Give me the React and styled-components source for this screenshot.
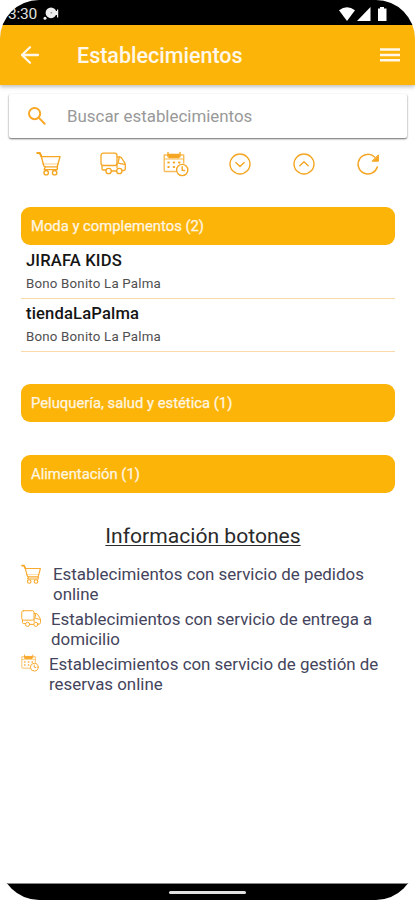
import React from "react";
import styled, { createGlobalStyle } from "styled-components";

const GlobalStyle = createGlobalStyle`
  * { box-sizing: border-box; }
  body { margin: 0; background: #fff; font-family: Roboto, "Liberation Sans", sans-serif; }
  button { border: 0; padding: 0; background: none; font: inherit; color: inherit; }
`;

const Screen = styled.div`
  width: 415px;
  height: 900px;
  display: flex;
  flex-direction: column;
  overflow: hidden;
  border-radius: 39px;
  background: #fff;
`;

const StatusBar = styled.div`
  height: 25px;
  flex: none;
  display: flex;
  align-items: center;
  justify-content: space-between;
  padding: 2px 27px 0 8px;
  background: #000;
  color: #fff;
`;

const StatusGroup = styled.div`
  display: flex;
  align-items: center;
  gap: ${(p) => p.$gap}px;
`;

const Clock = styled.span`
  font-size: 15.5px;
  line-height: 18px;
  color: #e0e0e0;
  letter-spacing: -0.2px;
`;

const AppBar = styled.header`
  height: 60px;
  flex: none;
  display: flex;
  align-items: center;
  padding: 0 14px 0 18px;
  background: #fdb409;
  color: #fff8ea;
  box-shadow: 0 2px 4px rgba(0, 0, 0, 0.25);
`;

const IconButton = styled.button`
  display: flex;
`;

const Title = styled.h1`
  flex: 1;
  margin: 2px 0 0 35px;
  font-size: 21.5px;
  line-height: 28px;
  font-weight: 500;
`;

const SearchBox = styled.label`
  height: 44px;
  flex: none;
  display: flex;
  align-items: center;
  gap: 20px;
  margin: 9px 8px 0 9px;
  padding-left: 18px;
  border-radius: 2px;
  background: #fff;
  box-shadow: 0 1px 2px rgba(0, 0, 0, 0.6);
  color: #f9a825;
`;

const SearchInput = styled.input`
  flex: 1;
  border: 0;
  outline: 0;
  padding: 0;
  background: none;
  font: 400 16.9px/22px Roboto, "Liberation Sans", sans-serif;
  color: #333;
  &::placeholder { color: #999; opacity: 1; }
`;

const Toolbar = styled.nav`
  height: 28px;
  flex: none;
  display: grid;
  grid-template-columns: repeat(6, 63.8px);
  place-items: center;
  margin: 12px 0 0 17px;
  color: #f5a623;
`;

const Section = styled.section`
  margin: ${(p) => p.$top}px 20px 0 21px;
`;

const SectionHeader = styled.h2`
  height: 38px;
  margin: 0;
  padding-left: 10px;
  border-radius: 9px;
  background: #fdb409;
  color: #fff6e2;
  font-size: 14.8px;
  font-weight: 400;
  line-height: 38px;
  -webkit-text-stroke: 0.25px #fff6e2;
`;

const Shop = styled.article`
  height: ${(p) => p.$height}px;
  padding: ${(p) => p.$height - 48}px 5px 0;
  border-bottom: 1px solid #fbd9a8;
`;

const ShopName = styled.h3`
  margin: 0;
  font-size: 16.6px;
  line-height: 20px;
  font-weight: 500;
  color: #151515;
  letter-spacing: 0.15px;
`;

const ShopOffer = styled.p`
  margin: 4px 0 0;
  font-size: 13.3px;
  line-height: 18px;
  letter-spacing: 0.2px;
  color: #505050;
`;

const Legend = styled.section`
  flex: 1;
  padding: 29px 20px 0 21px;
`;

const LegendTitle = styled.h2`
  margin: 0 10px 15px 0;
  text-align: center;
  font-size: 21.1px;
  font-weight: 400;
  line-height: 27px;
  color: #2a2a2a;
  text-decoration: underline;
  text-decoration-thickness: 1px;
  text-underline-offset: 2px;
`;

const LegendRow = styled.div`
  height: 45px;
  display: flex;
  align-items: flex-start;
  gap: ${(p) => p.$gap}px;
  color: #f9a92c;
  svg { flex: none; }
`;

const LegendText = styled.p`
  margin: 0;
  font-size: 16.9px;
  line-height: 20px;
  color: #44445c;
  white-space: pre-line;
`;

const NavBar = styled.footer`
  height: 17px;
  flex: none;
  display: flex;
  align-items: center;
  justify-content: center;
  border-top: 1px solid #888;
  background: #000;
`;

const HomeHandle = styled.div`
  width: 77px;
  height: 3px;
  border-radius: 2px;
  background: #e2e2e2;
`;

function Icon({ size = 26, box = "0 0 26 26", stroke = 1.4, children }) {
  return (
    <svg width={size} height={size} viewBox={box} fill="none" stroke="currentColor"
      strokeWidth={stroke} strokeLinecap="round" strokeLinejoin="round">
      {children}
    </svg>
  );
}

const CartIcon = (props) => (
  <Icon {...props}>
    <path d="M6.6 13h15.8" opacity=".35" />
    <path d="M1.3 2h2.5l1.6 3.6 2.3 9c.3.9.8 1.3 1.7 1.3h11.8L24 5.6H5.5" />
    <path d="M1.3 2h2.5l1.4 3" strokeWidth="2" />
    <path d="M9.2 16l-1 2.6h13L21.4 16" />
    <circle cx="10.2" cy="21.7" r="2.2" /><circle cx="18.6" cy="21.7" r="2.2" />
  </Icon>
);

const TruckIcon = (props) => (
  <Icon {...props} stroke={1.3}>
    <rect x="1" y="2.2" width="16" height="12.3" rx="2.3" />
    <path d="M2 14.5v3.3c0 .8.5 1.2 1.3 1.2h2.5M11.4 20h5.2M17 5.8h2.2c1 0 1.8.4 2.4 1.2l3 4.7c.5.8.7 1.5.7 2.4v3.6c0 1-.6 1.8-1.6 1.8h-1.2M19.4 6l-1.2 5c-.2.8.2 1.3 1 1.4l5.4 1M17 12.5v4" />
    <circle cx="8.6" cy="20" r="2.7" /><circle cx="19.3" cy="20" r="2.7" />
  </Icon>
);

const CalendarIcon = (props) => (
  <Icon {...props}>
    <path d="M13 20.5H2.5c-.8 0-1.3-.5-1.3-1.3V4h19.5v8" opacity=".75" />
    <path d="M5 1.5v4M17 1.5v4" />
    <path d="M6 3.5h10v3H6z" fill="currentColor" />
    <path d="M2 8h18" opacity=".55" />
    <path d="M5.3 11.5h.5M10.7 11.5h.5M16 11.5h.5M5.3 16h.5M10.7 16h.5" strokeWidth="2.1" />
    <circle cx="19.2" cy="19" r="5.6" fill="#fff" /><path d="M19.2 15.8v3.4l2.3.3" />
  </Icon>
);

const ChevronCircleIcon = ({ up }) => (
  <Icon size={24} box="0 0 24 24" stroke={1.35}>
    <circle cx="12" cy="12" r="10" />
    <path d={up ? "M7.8 13.8L12 9.7l4.2 4.1" : "M7.8 10.5l4.2 4.1 4.2-4.1"} />
  </Icon>
);

const ReloadIcon = () => (
  <Icon size={24} box="0 0 24 24" stroke={1.5}>
    <path d="M18.6 5A9.8 9.8 0 1 0 21.3 15" />
    <path d="M22.4 3.2v6h-6z" fill="currentColor" strokeWidth="1" />
  </Icon>
);

export default function App() {
  return (
    <>
      <GlobalStyle />
      <Screen>
        <StatusBar>
          <StatusGroup $gap={6}>
            <Clock>3:30</Clock>
            <svg width="16" height="14" viewBox="0 0 16 14" fill="#eee">
              <circle cx="8" cy="5.8" r="5.4" /><circle cx="2" cy="11.2" r="1.5" />
              <path d="M12 4h2V2.5h1.2v8H14V8h-2z" /><circle cx="8.4" cy="5.7" r="1" fill="#aaa" />
            </svg>
          </StatusGroup>
          <StatusGroup $gap={2}>
            <svg width="16" height="14" viewBox="0 0 16 14" fill="#fff"><path d="M0 3.2Q8-2.8 16 3.2L8 14z" /></svg>
            <svg width="14" height="14" viewBox="0 0 14 14" fill="#fff"><path d="M13.5 0v14H0z" /></svg>
            <svg width="15" height="14" viewBox="0 0 15 14" fill="#fff"><path d="M5 1.5h2V0h4v1.5h2.5V14H5z" /></svg>
          </StatusGroup>
        </StatusBar>
        <AppBar>
          <IconButton aria-label="Volver">
            <Icon size={24} box="0 0 24 24" stroke={2.3}><path d="M20 12H4M12 4.2L4 12l8 7.8" /></Icon>
          </IconButton>
          <Title>Establecimientos</Title>
          <IconButton aria-label="Menú">
            <svg width="22" height="16" viewBox="0 0 22 16" fill="currentColor"><path d="M1 1.2h20v2.5H1zM1 6.7h20v2.5H1zM1 12h20v2.5H1z" /></svg>
          </IconButton>
        </AppBar>
        <SearchBox>
          <Icon size={20} box="0 0 20 20" stroke={2}>
            <circle cx="7.6" cy="7.6" r="5.6" /><path d="M11.9 11.9l5.8 5.9" />
          </Icon>
          <SearchInput placeholder="Buscar establecimientos" />
        </SearchBox>
        <Toolbar>
          <CartIcon /><TruckIcon /><CalendarIcon />
          <ChevronCircleIcon /><ChevronCircleIcon up /><ReloadIcon />
        </Toolbar>
        <Section $top={29}>
          <SectionHeader>Moda y complementos (2)</SectionHeader>
          <Shop $height={54}>
            <ShopName>JIRAFA KIDS</ShopName>
            <ShopOffer>Bono Bonito La Palma</ShopOffer>
          </Shop>
          <Shop $height={53}>
            <ShopName>tiendaLaPalma</ShopName>
            <ShopOffer>Bono Bonito La Palma</ShopOffer>
          </Shop>
        </Section>
        <Section $top={32}>
          <SectionHeader>Peluquería, salud y estética (1)</SectionHeader>
        </Section>
        <Section $top={33}>
          <SectionHeader>Alimentación (1)</SectionHeader>
        </Section>
        <Legend>
          <LegendTitle>Información botones</LegendTitle>
          <LegendRow $gap={11}>
            <CartIcon size={21} />
            <LegendText>{"Establecimientos con servicio de pedidos\nonline"}</LegendText>
          </LegendRow>
          <LegendRow $gap={10}>
            <TruckIcon size={20} />
            <LegendText>{"Establecimientos con servicio de entrega a\ndomicilio"}</LegendText>
          </LegendRow>
          <LegendRow $gap={10}>
            <CalendarIcon size={18} />
            <LegendText>{"Establecimientos con servicio de gestión de\nreservas online"}</LegendText>
          </LegendRow>
        </Legend>
        <NavBar><HomeHandle /></NavBar>
      </Screen>
    </>
  );
}
